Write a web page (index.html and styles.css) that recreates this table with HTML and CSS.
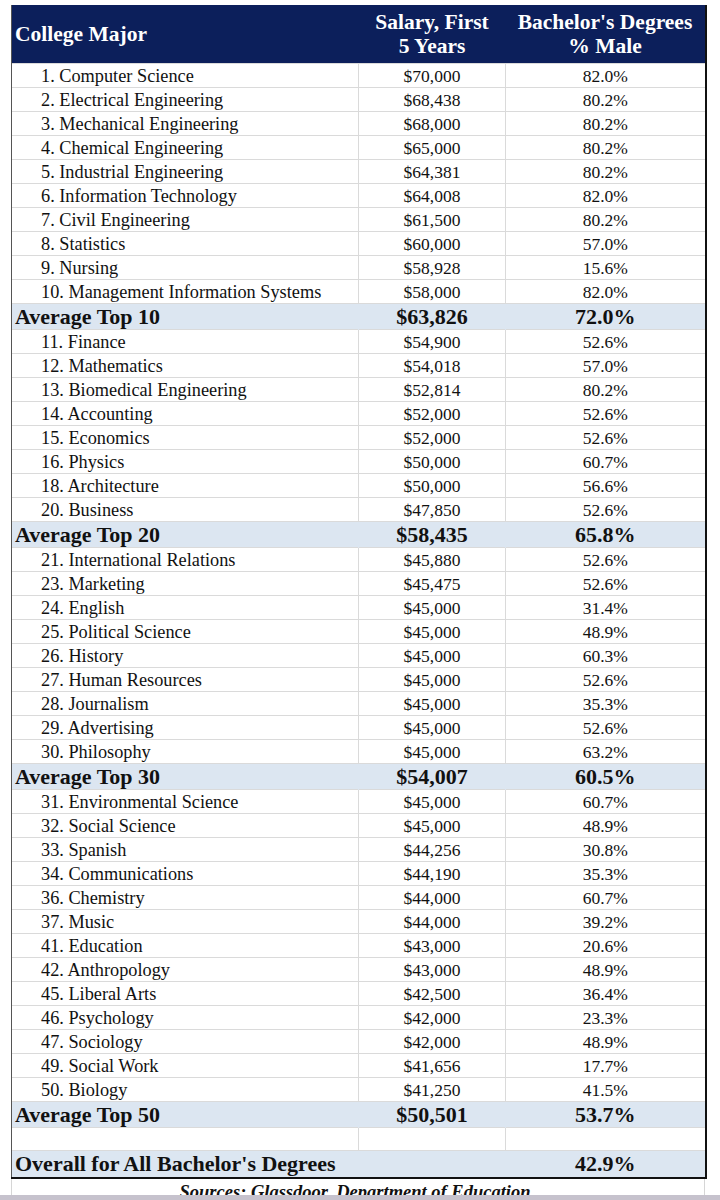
FILE: index.html
```html
<!DOCTYPE html>
<html lang="en">
<head>
    <meta charset="UTF-8">
    <title>Top College Majors</title>
    <link rel="stylesheet" href="styles.css">
</head>
<body>
    <div class="sheet">
        <table class="majors">
            <colgroup>
                <col class="c-major">
                <col class="c-salary">
                <col class="c-male">
            </colgroup>
            <thead>
                <tr>
                    <th class="left">College Major</th>
                    <th>Salary, First<br>5 Years</th>
                    <th>Bachelor's Degrees<br>% Male</th>
                </tr>
            </thead>
            <tbody id="rows"></tbody>
        </table>
        <div class="sources"><span>Sources: Glassdoor, Department of Education</span></div>
    </div>
    <div class="taskbar"></div>

    <script>
        const data = [
            ['1. Computer Science', '$70,000', '82.0%'],
            ['2. Electrical Engineering', '$68,438', '80.2%'],
            ['3. Mechanical Engineering', '$68,000', '80.2%'],
            ['4. Chemical Engineering', '$65,000', '80.2%'],
            ['5. Industrial Engineering', '$64,381', '80.2%'],
            ['6. Information Technology', '$64,008', '82.0%'],
            ['7. Civil Engineering', '$61,500', '80.2%'],
            ['8. Statistics', '$60,000', '57.0%'],
            ['9. Nursing', '$58,928', '15.6%'],
            ['10. Management Information Systems', '$58,000', '82.0%'],
            ['*Average Top 10', '$63,826', '72.0%'],
            ['11. Finance', '$54,900', '52.6%'],
            ['12. Mathematics', '$54,018', '57.0%'],
            ['13. Biomedical Engineering', '$52,814', '80.2%'],
            ['14. Accounting', '$52,000', '52.6%'],
            ['15. Economics', '$52,000', '52.6%'],
            ['16. Physics', '$50,000', '60.7%'],
            ['18. Architecture', '$50,000', '56.6%'],
            ['20. Business', '$47,850', '52.6%'],
            ['*Average Top 20', '$58,435', '65.8%'],
            ['21. International Relations', '$45,880', '52.6%'],
            ['23. Marketing', '$45,475', '52.6%'],
            ['24. English', '$45,000', '31.4%'],
            ['25. Political Science', '$45,000', '48.9%'],
            ['26. History', '$45,000', '60.3%'],
            ['27. Human Resources', '$45,000', '52.6%'],
            ['28. Journalism', '$45,000', '35.3%'],
            ['29. Advertising', '$45,000', '52.6%'],
            ['30. Philosophy', '$45,000', '63.2%'],
            ['*Average Top 30', '$54,007', '60.5%'],
            ['31. Environmental Science', '$45,000', '60.7%'],
            ['32. Social Science', '$45,000', '48.9%'],
            ['33. Spanish', '$44,256', '30.8%'],
            ['34. Communications', '$44,190', '35.3%'],
            ['36. Chemistry', '$44,000', '60.7%'],
            ['37. Music', '$44,000', '39.2%'],
            ['41. Education', '$43,000', '20.6%'],
            ['42. Anthropology', '$43,000', '48.9%'],
            ['45. Liberal Arts', '$42,500', '36.4%'],
            ['46. Psychology', '$42,000', '23.3%'],
            ['47. Sociology', '$42,000', '48.9%'],
            ['49. Social Work', '$41,656', '17.7%'],
            ['50. Biology', '$41,250', '41.5%'],
            ['*Average Top 50', '$50,501', '53.7%'],
            ['', '', ''],
            ['*Overall for All Bachelor\'s Degrees', '', '42.9%']
        ];

        const body = document.getElementById('rows');
        data.forEach(([major, salary, male]) => {
            const tr = document.createElement('tr');
            let name = major;
            if (major.startsWith('*')) {
                tr.className = 'avg';
                name = major.slice(1);
            } else if (!major) {
                tr.className = 'blank';
            }
            if (name.startsWith('Overall')) tr.classList.add('overall');
            [name, salary, male].forEach((text, i) => {
                const td = document.createElement('td');
                td.textContent = text;
                if (i === 0) td.className = 'major';
                tr.appendChild(td);
            });
            body.appendChild(tr);
        });
    </script>
</body>
</html>
```

FILE: styles.css
```css
body {
    margin: 0;
    background: #fff;
    font-family: 'Liberation Serif', 'Times New Roman', serif;
    color: #111;
    height: 1200px;
    overflow: hidden;
}

.sheet {
    padding: 5px 0 0 11px;
    width: 694px;
}

.majors {
    width: 694px;
    border-collapse: collapse;
    table-layout: fixed;
    border-left: 1px solid #555;
    border-right: 2px solid #111;
    border-bottom: 2px solid #111;
}

.c-major { width: 347px; }
.c-salary { width: 147px; }
.c-male { width: 200px; }

.majors th {
    background: #0c1f5b;
    color: #fff;
    font-size: 21.5px;
    font-weight: bold;
    line-height: 24px;
    height: 58px;
    padding: 0;
    text-align: center;
    vertical-align: middle;
}

.majors th.left {
    text-align: left;
    padding-left: 3px;
}

.majors td {
    height: 23px;
    padding: 0;
    font-size: 17.5px;
    line-height: 22px;
    text-align: center;
    border-top: 1px solid #dadada;
    border-left: 1px solid #dadada;
    vertical-align: middle;
}

.majors td.major {
    font-size: 18.3px;
    text-align: left;
    padding-left: 29px;
    border-left: 1px solid #555;
}

.majors tr.avg td {
    background: #dce6f1;
    font-weight: bold;
    font-size: 22px;
    height: 25px;
}

.majors tr.avg td.major {
    font-size: 22px;
    padding-left: 3px;
}

.majors tr.avg td + td {
    border-left-color: #dce6f1;
}

.majors tr.blank td {
    height: 22px;
}

.majors tr.overall td {
    height: 26px;
}

.sources {
    height: 16px;
    overflow: hidden;
    text-align: center;
    border-left: 1px solid #d6d6d6;
    border-right: 1px solid #d6d6d6;
    width: 692px;
}

.sources span {
    display: inline-block;
    margin-top: 3px;
    font-size: 18.5px;
    line-height: 20px;
    font-weight: bold;
    font-style: italic;
    padding-right: 6px;
}

.taskbar {
    height: 8px;
    background: #c6c2cd;
}
```
